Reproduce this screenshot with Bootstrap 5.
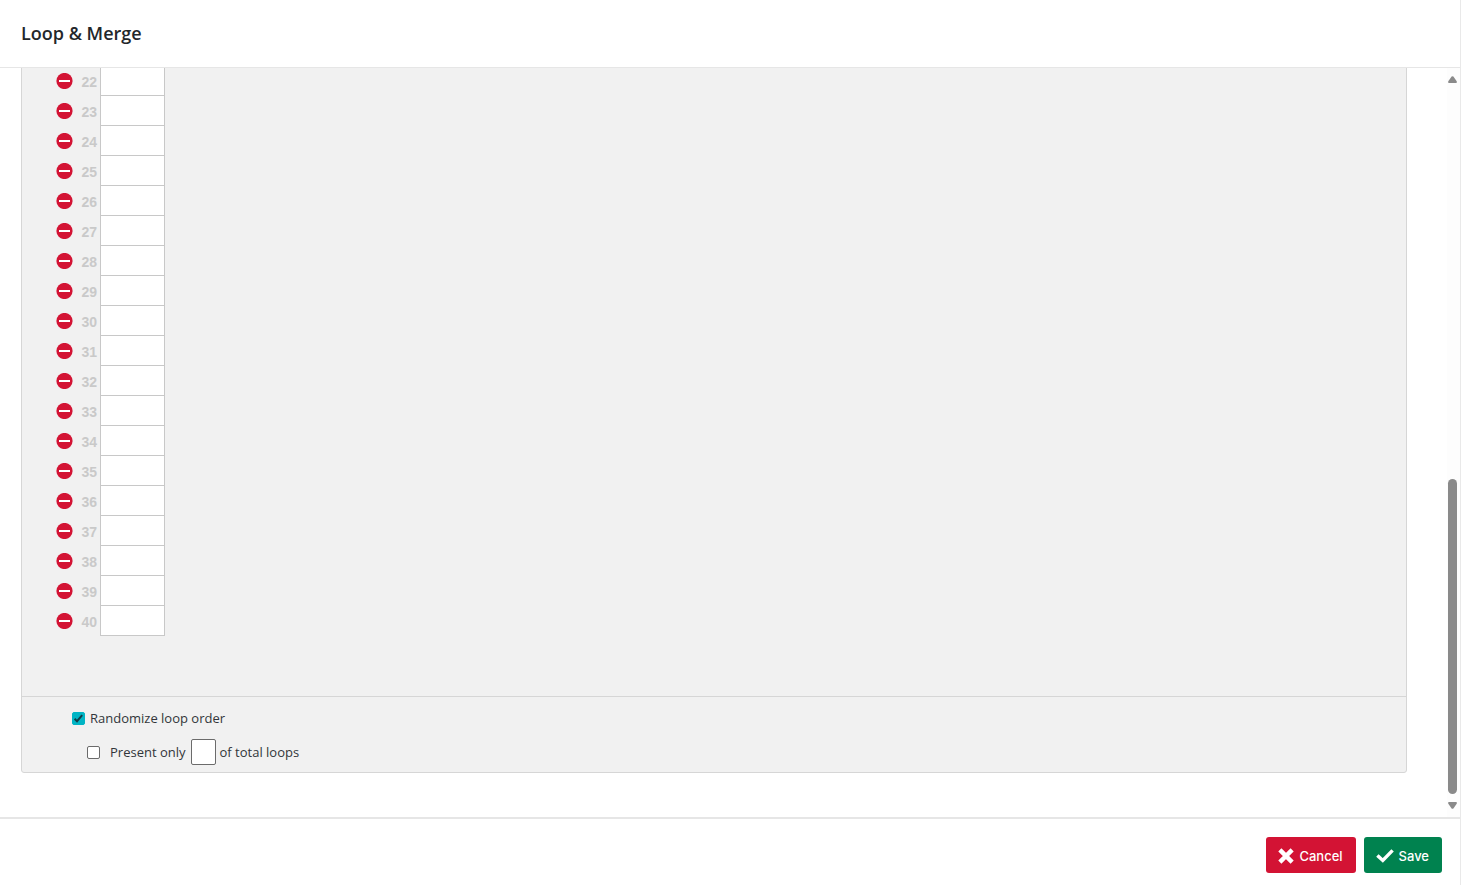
<!DOCTYPE html>
<html lang="en">
<head>
<meta charset="utf-8">
<meta name="viewport" content="width=device-width, initial-scale=1">
<title>Loop &amp; Merge</title>
<link href="https://cdn.jsdelivr.net/npm/bootstrap@5.3.0/dist/css/bootstrap.min.css" rel="stylesheet">
<style>
  body { font-family: "Open Sans", "Noto Sans", sans-serif; font-size: 13px; line-height: 22px; color: #32363a; }
  .dialog { border-right: 1px solid #e9e9e9; }
  .dialog-head { padding: 18px 21px 19px; border-bottom: 1px solid #e6e6e6; }
  .dialog-head h1 { font-size: 18px; line-height: 30px; font-weight: 600; color: #23272b; }
  .scroll-view { padding: 0 40px 44px 21px; min-height: 0; }
  .panel { background: #f1f1f1; border: 1px solid #d6d6d6; border-radius: 3px; }
  .loops { margin: 0 0 60px 34px; border-collapse: separate; border-spacing: 0; }
  .loops tr { height: 30px; }
  .loops td, .loops th { padding: 0; vertical-align: middle; }
  .remove-cell { width: 24px; }
  .num-cell { width: 20px; text-align: right; font: bold 14px/16px "Liberation Sans", sans-serif; color: #c9c9c9; }
  .loops .num-cell { padding: 2px 3px 0 0; }
  .value-cell { width: 65px; background: #fff; border: solid #c8c8c8; border-width: 0 1px 1px; }
  .value-cell input { width: 63px; height: 29px; outline-offset: -1px; }
  .options { border-top: 1px solid #d6d6d6; padding: 10px 50px 7px; }
  .options input[type=checkbox] { width: 13px; height: 13px; margin: 0; border: 1px solid #6b6b6b; border-radius: 2px; background-color: #fff; float: none; }
  .options input[type=checkbox]:checked { background-color: #00b4c4; border-color: #00b4c4; background-size: 13px 13px;
    background-image: url("data:image/svg+xml,%3csvg xmlns='http://www.w3.org/2000/svg' viewBox='0 0 13 13'%3e%3cpath d='M2.6 6.8 5 9.2 10.2 3.2' fill='none' stroke='%23123d48' stroke-width='2'/%3e%3c/svg%3e"); }
  .random-label { padding-left: 5px; }
  .present-label { padding-left: 10px; }
  .sub-option { margin: 10px 0 0 15px; }
  .count-box { width: 25px; height: 26px; margin: 0 4px 0 5px; border: 1px solid #6b6b6b; border-radius: 2px; background: #fff; padding: 0 4px; }
  .scroll-rail { width: 13px; padding: 8px 3px 8px 1px; background: #fdfdfd; }
  .scroll-track { padding-top: 396px; }
  .scroll-thumb { width: 9px; background: #8a8a8a; border-radius: 5px; }
  .dialog-foot { padding: 18px 18px 12px; border-top: 2px solid #e6e6e6; }
  .dialog-foot .btn { height: 36px; gap: 5px; padding: 1px 13px 0 12px; border: 0; border-radius: 3px; font-family: Inter, "Open Sans", sans-serif; font-size: 13px; line-height: 36px; font-weight: 500; color: #fff; }
  .btn-cancel, .btn-cancel:hover { background: #d31334; }
  .btn-save, .btn-save:hover { background: #00824f; }
</style>
</head>
<body>
<div class="dialog d-flex flex-column vh-100 bg-white">
  <header class="dialog-head"><h1 class="m-0">Loop &amp; Merge</h1></header>

  <div class="d-flex flex-grow-1 overflow-hidden">
    <main class="scroll-view d-flex flex-column justify-content-end flex-grow-1 overflow-hidden">
      <form class="panel" id="loop-form">
        <table class="loops"><tbody id="loop-rows"></tbody></table>
        <div class="options">
          <div class="d-flex align-items-center">
            <input class="form-check-input" type="checkbox" id="randomize" checked>
            <label class="random-label" for="randomize">Randomize loop order</label>
          </div>
          <div class="sub-option d-flex align-items-center">
            <input class="form-check-input" type="checkbox" id="present">
            <label class="present-label" for="present">Present only</label>
            <input class="count-box" type="text" id="count" aria-label="Number of loops to present">
            <label for="count">of total loops</label>
          </div>
        </div>
      </form>
    </main>
    <div class="scroll-rail d-flex flex-column" aria-hidden="true">
      <svg width="9" height="7" viewBox="0 0 9 7"><path d="M3.6.6Q4.5-.3 5.4.6L8.7 5.3Q9.3 7 8 7H1Q-.3 7 .3 5.3Z" fill="#8a8a8a"/></svg>
      <div class="scroll-track d-flex flex-grow-1"><div class="scroll-thumb"></div></div>
      <svg class="mt-2" width="9" height="7" viewBox="0 0 9 7"><path d="M3.6 6.4Q4.5 7.3 5.4 6.4L8.7 1.7Q9.3 0 8 0H1Q-.3 0 .3 1.7Z" fill="#8a8a8a"/></svg>
    </div>
  </div>

  <footer class="dialog-foot d-flex justify-content-end gap-2">
    <button type="button" class="btn btn-cancel d-flex align-items-center">
      <svg width="16" height="16" viewBox="0 0 16 16"><path d="M3.4 3.4 12.6 12.6M12.6 3.4 3.4 12.6" stroke="#fff" stroke-width="4.4" stroke-linecap="square"/></svg>Cancel</button>
    <button type="submit" form="loop-form" class="btn btn-save d-flex align-items-center">
      <svg width="18" height="16" viewBox="0 0 18 16"><path d="M2.6 8.6 6.8 12.4 15.4 3.6" fill="none" stroke="#fff" stroke-width="3.4" stroke-linecap="square"/></svg>Save</button>
  </footer>
</div>

<template id="loop-row">
  <tr>
    <td class="remove-cell">
      <button type="button" class="btn p-0 border-0 d-block">
        <svg class="d-block" width="17" height="16" viewBox="0 0 17 16"><circle cx="8.5" cy="8" r="8.1" fill="#d31334"/><path d="M3 8H14" stroke="#fff" stroke-width="2"/></svg>
      </button>
    </td>
    <th class="num-cell" scope="row"></th>
    <td class="value-cell"><input type="text" class="d-block border-0 px-1 bg-transparent"></td>
  </tr>
</template>
<script src="https://cdn.jsdelivr.net/npm/bootstrap@5.3.0/dist/js/bootstrap.bundle.min.js"></script>
<script>
  const rows = document.getElementById('loop-rows');
  const template = document.getElementById('loop-row');
  for (let n = 22; n <= 40; n++) {
    const row = template.content.cloneNode(true);
    row.querySelector('th').textContent = n;
    row.querySelector('button').setAttribute('aria-label', 'Remove loop ' + n);
    row.querySelector('input').setAttribute('aria-label', 'Loop ' + n + ' value');
    rows.append(row);
  }
</script>
</body>
</html>
